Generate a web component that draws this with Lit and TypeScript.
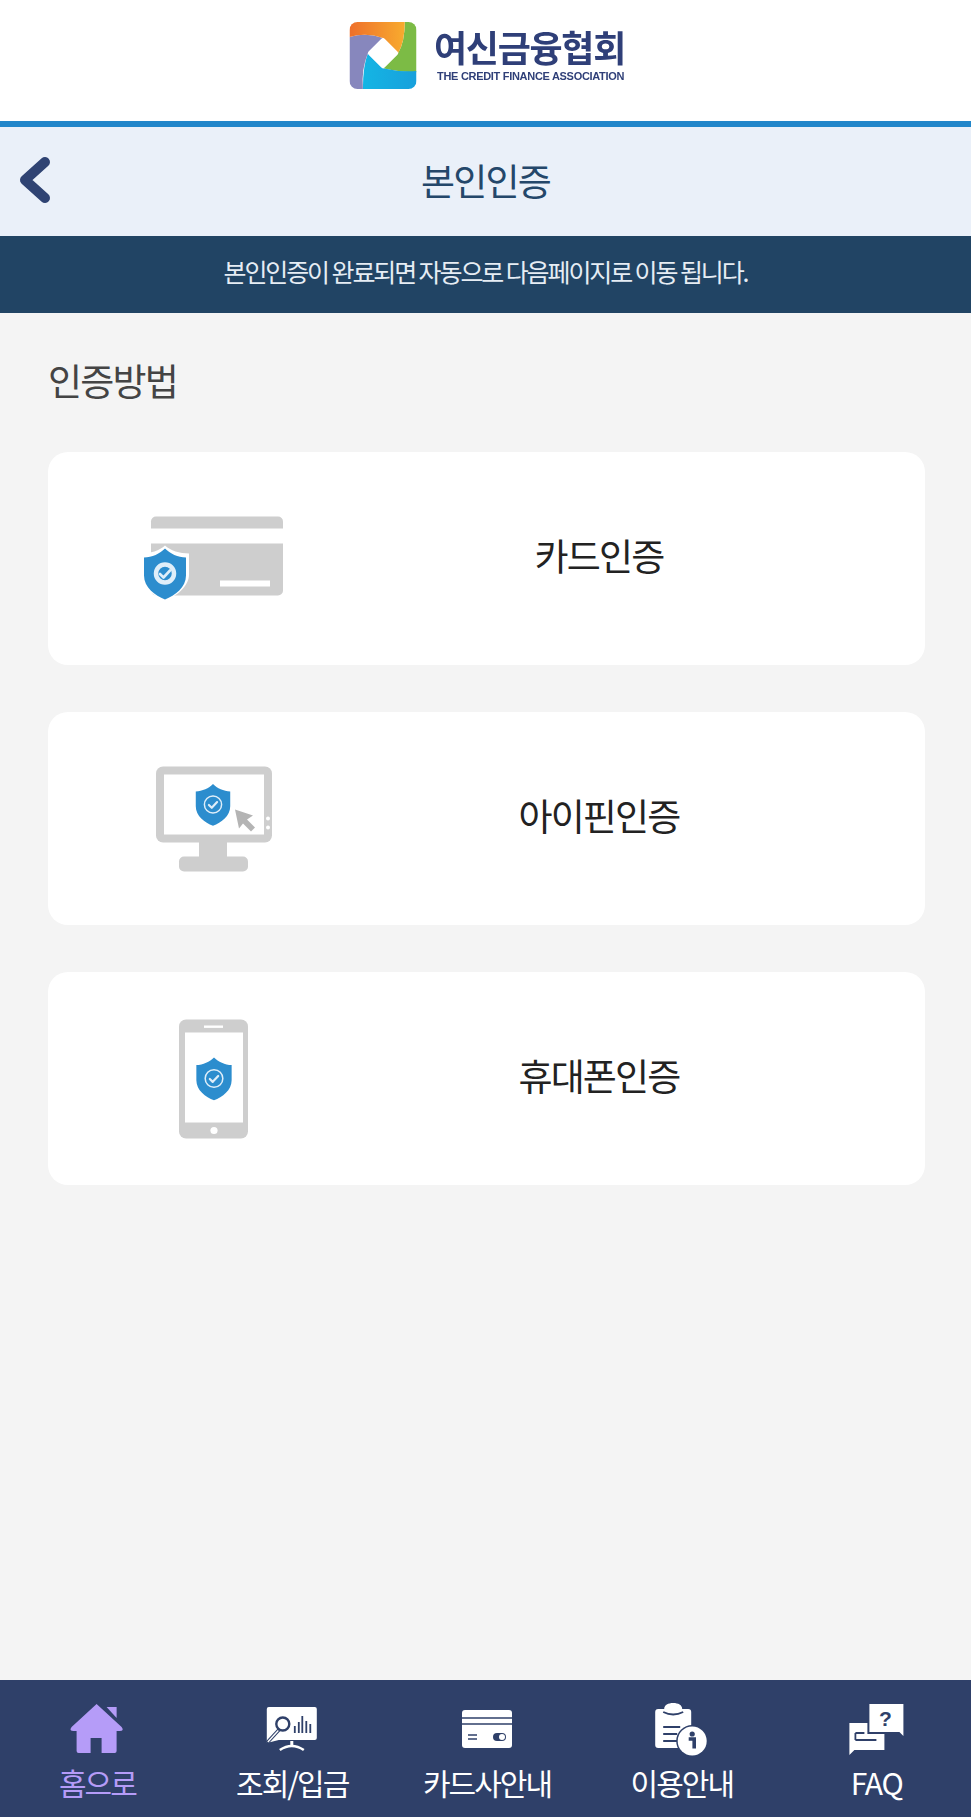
import { LitElement, html, css, svg } from 'lit';
import { customElement } from 'lit/decorators.js';

// icons are drawn in page coordinates, the viewBox picks out the window around each one
const shield = (x: number, y: number, s: number, ringStroke: number, ringR: number) => svg`
  <g transform="translate(${x} ${y}) scale(${s})">
    <path d="M0-25C5-20 13-16 21-16V2C21 14 10 22 0 26C-10 22-21 14-21 2V-16C-13-16-5-20 0-25Z" fill="#2c8dce"/>
    <circle r=${ringR} fill="none" stroke="#dfeef9" stroke-width=${ringStroke}/>
    <path d="M-5 0.5L-1.5 4L5-3" fill="none" stroke="#dfeef9" stroke-width="2.6" stroke-linecap="round" stroke-linejoin="round"/>
  </g>`;

const cardIcon = html`<svg class="method-icon" viewBox="120 493.5 190 130">
  <path d="M151 521a5 5 0 0 1 5-5h122a5 5 0 0 1 5 5v7H151Z" fill="#cecece"/>
  <path d="M151 543h132v47a5 5 0 0 1-5 5H156a5 5 0 0 1-5-5Z" fill="#cecece"/>
  <rect x="220" y="580" width="50" height="6" fill="#fff"/>
  <path d="M165 545C170 550 180 553 189 553V574C189 586 176 596 165 600C154 596 141 586 141 574V553C150 553 160 550 165 545Z" fill="#fff"/>
  ${shield(165, 573, 1, 4.5, 9)}
</svg>`;

const monitorIcon = html`<svg class="method-icon" viewBox="120 753.5 190 130">
  <rect x="156" y="766" width="116" height="76" rx="7" fill="#cecece"/>
  <rect x="164" y="774" width="100" height="60" fill="#fff"/>
  <rect x="199" y="841" width="28" height="17" fill="#cecece"/>
  <rect x="179" y="856" width="69" height="15" rx="5" fill="#cecece"/>
  <circle cx="268" cy="818" r="2" fill="#fff"/>
  <circle cx="268" cy="827" r="2" fill="#fff"/>
  <path d="M235 809L253 815L247 819L255 827L251 831L243 823L239 828Z" fill="#b4b4b4"/>
  ${shield(213, 804, 0.82, 1.8, 10.5)}
</svg>`;

const phoneIcon = html`<svg class="method-icon" viewBox="120 1013.5 190 130">
  <rect x="179" y="1019" width="69" height="119" rx="7" fill="#cecece"/>
  <rect x="185" y="1032" width="58" height="90" fill="#fff"/>
  <rect x="204" y="1025" width="19" height="2.4" fill="#fff"/>
  <circle cx="214" cy="1130" r="3.6" fill="#fff"/>
  ${shield(214, 1078, 0.84, 1.8, 10.5)}
</svg>`;

const homeIcon = html`<svg class="nav-icon" viewBox="67.4 1700 60 60">
  <path d="M107 1707h10v11Z" fill="#b59cf8"/>
  <path d="M97 1704L122 1727Q125 1731 120 1731H117V1751a2 2 0 0 1-2 2H102V1738H91V1753H79a2 2 0 0 1-2-2V1731H74Q69 1731 72 1727Z" fill="#b59cf8"/>
</svg>`;

const boardIcon = html`<svg class="nav-icon" viewBox="262.2 1700 60 60">
  <path d="M267 1709a2 2 0 0 1 2-2h46a2 2 0 0 1 2 2v29a2 2 0 0 1-2 2H279L267 1743Z" fill="#fff"/>
  <circle cx="283" cy="1724" r="6.5" fill="#fff" stroke="#2f4069" stroke-width="2.4"/>
  <path d="M279 1730L267 1743" stroke="#2f4069" stroke-width="3.4"/>
  <path d="M278.5 1730.5L268 1742" stroke="#fff" stroke-width="1.4"/>
  <path d="M295 1733v-7M299 1733v-11M302.5 1733v-17M306.5 1733v-12M310.5 1733v-9" stroke="#2f4069" stroke-width="1.8"/>
  <path d="M292 1741v5" stroke="#fff" stroke-width="3"/>
  <path d="M280 1750Q292 1742 304 1750" fill="none" stroke="#fff" stroke-width="2.6"/>
</svg>`;

const cardNavIcon = html`<svg class="nav-icon" viewBox="457 1700 60 60">
  <rect x="462" y="1710" width="50" height="38" rx="3" fill="#fff"/>
  <path d="M462 1718h50M462 1724h50" stroke="#2f4069" stroke-width="1.6"/>
  <path d="M468 1735h9M468 1739h9" stroke="#2f4069" stroke-width="1.4"/>
  <rect x="493" y="1733" width="13" height="8" rx="4" fill="#2f4069"/>
  <circle cx="502" cy="1737" r="3" fill="#fff"/>
</svg>`;

const guideIcon = html`<svg class="nav-icon" viewBox="651.8 1700 60 60">
  <path d="M658 1709h6c0-4 4-6 9-6s9 2 9 6h6a3 3 0 0 1 3 3v36h-33a3 3 0 0 1-3-3v-33a3 3 0 0 1 3-3Z" fill="#fff"/>
  <path d="M663 1712q10 5 20 0" fill="none" stroke="#2f4069" stroke-width="1.8"/>
  <path d="M663 1727h17M663 1734h14M663 1741h14" stroke="#2f4069" stroke-width="2.2"/>
  <circle cx="692" cy="1741" r="16" fill="#2f4069"/>
  <circle cx="692" cy="1741" r="14.5" fill="#fff"/>
  <circle cx="692" cy="1734" r="2.6" fill="#2f4069"/>
  <path d="M688.5 1739h5.5v9.5" fill="none" stroke="#2f4069" stroke-width="3.6"/>
</svg>`;

const faqIcon = html`<svg class="nav-icon" viewBox="846.6 1700 60 60">
  <path d="M849 1723h35v27H854L849 1755Z" fill="#fff"/>
  <path d="M867 1702h38v36L900 1734H867Z" fill="#2f4069"/>
  <path d="M869 1704h34v32L899 1732H869Z" fill="#fff"/>
  <text x="885" y="1726" text-anchor="middle" class="faq-mark">?</text>
  <path d="M855 1733h9M855 1740h21" stroke="#2f4069" stroke-width="1.8"/>
  <path d="M855 1733v7" stroke="#2f4069" stroke-width="1.8"/>
</svg>`;

const METHODS = [
  { label: '카드인증', icon: cardIcon },
  { label: '아이핀인증', icon: monitorIcon },
  { label: '휴대폰인증', icon: phoneIcon },
];

const NAV = [
  { label: '홈으로', icon: homeIcon, active: true },
  { label: '조회/입금', icon: boardIcon },
  { label: '카드사안내', icon: cardNavIcon },
  { label: '이용안내', icon: guideIcon },
  { label: 'FAQ', icon: faqIcon, latin: true },
];

@customElement('app-root')
export class AppRoot extends LitElement {
  static styles = css`
    :host {
      display: flex;
      flex-direction: column;
      height: 100vh;
      background: #f4f4f4;
      font-family: 'Noto Sans CJK KR', 'Noto Sans', sans-serif;
    }
    .brand {
      height: 121px;
      background: #fff;
      display: flex;
      align-items: flex-start;
      justify-content: center;
      gap: 17px;
      padding-top: 22px;
      padding-left: 3px;
      box-sizing: border-box;
    }
    .brand-mark {
      width: 68px;
      height: 67px;
      display: block;
      filter: blur(0.5px);
    }
    .brand-text {
      display: flex;
      flex-direction: column;
      color: #2f3f78;
      filter: blur(0.4px);
    }
    .brand-ko {
      font-size: 36px;
      font-weight: 700;
      line-height: 40px;
      letter-spacing: -1.3px;
      margin-top: 4px;
    }
    .brand-en {
      font-family: 'Liberation Sans', sans-serif;
      font-size: 11px;
      font-weight: 700;
      line-height: 10px;
      letter-spacing: -0.3px;
      margin-top: 5px;
      margin-left: 3px;
      white-space: nowrap;
    }
    .rule {
      height: 6px;
      background: #2186ca;
    }
    .subhead {
      height: 109px;
      box-sizing: border-box;
      padding-bottom: 4px;
      background: #eaf0f9;
      display: flex;
      align-items: center;
      justify-content: center;
      position: relative;
    }
    .back {
      position: absolute;
      left: 0;
      top: 0;
      width: 70px;
      height: 109px;
    }
    .subhead h1 {
      margin: 0;
      font-size: 37px;
      font-weight: 400;
      letter-spacing: -1.8px;
      color: #24476a;
    }
    .notice {
      height: 77px;
      box-sizing: border-box;
      padding-bottom: 8px;
      background: #214464;
      color: #e6edf4;
      font-size: 25px;
      letter-spacing: -2.1px;
      display: flex;
      align-items: center;
      justify-content: center;
    }
    main {
      flex: 1;
      padding: 0 46px 0 48px;
    }
    h2 {
      margin: 0;
      padding-top: 41px;
      font-size: 37px;
      line-height: 52px;
      font-weight: 400;
      letter-spacing: -1.8px;
      color: #444;
    }
    .methods {
      display: flex;
      flex-direction: column;
      gap: 47px;
      margin-top: 46px;
    }
    .method {
      height: 213px;
      background: #fff;
      border-radius: 20px;
      display: grid;
      grid-template-columns: 334px 434px;
      align-items: center;
      justify-items: center;
    }
    .method-icon {
      width: 190px;
      height: 130px;
      display: block;
      filter: blur(0.4px);
    }
    .method span {
      font-size: 37px;
      letter-spacing: -1.8px;
      color: #222;
      padding-bottom: 7px;
    }
    nav {
      height: 137px;
      background: #2f4069;
      display: grid;
      grid-template-columns: repeat(5, 194.8px);
      color: #fff;
    }
    .nav-item {
      display: flex;
      flex-direction: column;
      align-items: center;
      padding-top: 20px;
    }
    .nav-item.active {
      color: #b59cf8;
    }
    .nav-icon {
      width: 60px;
      height: 60px;
      display: block;
    }
    .nav-item span {
      font-size: 30px;
      line-height: 44px;
      letter-spacing: -2px;
      white-space: nowrap;
    }
    .nav-item.latin span {
      letter-spacing: -1.2px;
    }
    .faq-mark {
      font-family: 'Liberation Sans', sans-serif;
      font-size: 21px;
      font-weight: 700;
      fill: #2f4069;
    }
  `;

  render() {
    return html`
      <header class="brand">
        <svg class="brand-mark" viewBox="0 0 200 200">
          <defs>
            <linearGradient id="warm" x1="0" x2="1" y1="0" y2="0">
              <stop offset="0" stop-color="#ee6f2b" /><stop offset="1" stop-color="#f8ab2e" />
            </linearGradient>
            <linearGradient id="cool" x1="0" x2="1" y1="0" y2="0">
              <stop offset="0" stop-color="#14b5e4" /><stop offset="1" stop-color="#18a0dc" />
            </linearGradient>
            <clipPath id="tile"><rect width="200" height="200" rx="24" /></clipPath>
          </defs>
          <g clip-path="url(#tile)">
            <rect width="200" height="200" fill="#fff" />
            <path d="M165 0H200V150Q150 150 100 138L145 93Q165 60 165 0Z" fill="#7cbb45" />
            <path d="M200 146V200H40V200Q40 130 55 93L100 138Q150 150 200 146Z" fill="url(#cool)" />
            <path d="M0 45Q50 30 100 48L55 93Q35 140 40 200H0Z" fill="#8787bd" />
            <path d="M0 45Q50 30 100 48L145 93Q165 60 165 0H0Z" fill="url(#warm)" />
            <rect x="-34" y="-34" width="68" height="68" rx="7" fill="#fff" transform="translate(100 93) rotate(45)" />
          </g>
        </svg>
        <div class="brand-text">
          <span class="brand-ko">여신금융협회</span>
          <span class="brand-en">THE CREDIT FINANCE ASSOCIATION</span>
        </div>
      </header>
      <div class="rule"></div>
      <div class="subhead">
        <svg class="back" viewBox="0 0 70 109">
          <path d="M45 35L25 53L45 71" fill="none" stroke="#2f4373" stroke-width="10" stroke-linecap="round" stroke-linejoin="round" />
        </svg>
        <h1>본인인증</h1>
      </div>
      <div class="notice">본인인증이 완료되면 자동으로 다음페이지로 이동 됩니다.</div>
      <main>
        <h2>인증방법</h2>
        <div class="methods">
          ${METHODS.map((m) => html`<div class="method">${m.icon}<span>${m.label}</span></div>`)}
        </div>
      </main>
      <nav>
        ${NAV.map(
          (n) =>
            html`<div class="nav-item ${n.active ? 'active' : ''} ${n.latin ? 'latin' : ''}">${n.icon}<span>${n.label}</span></div>`,
        )}
      </nav>
    `;
  }
}
